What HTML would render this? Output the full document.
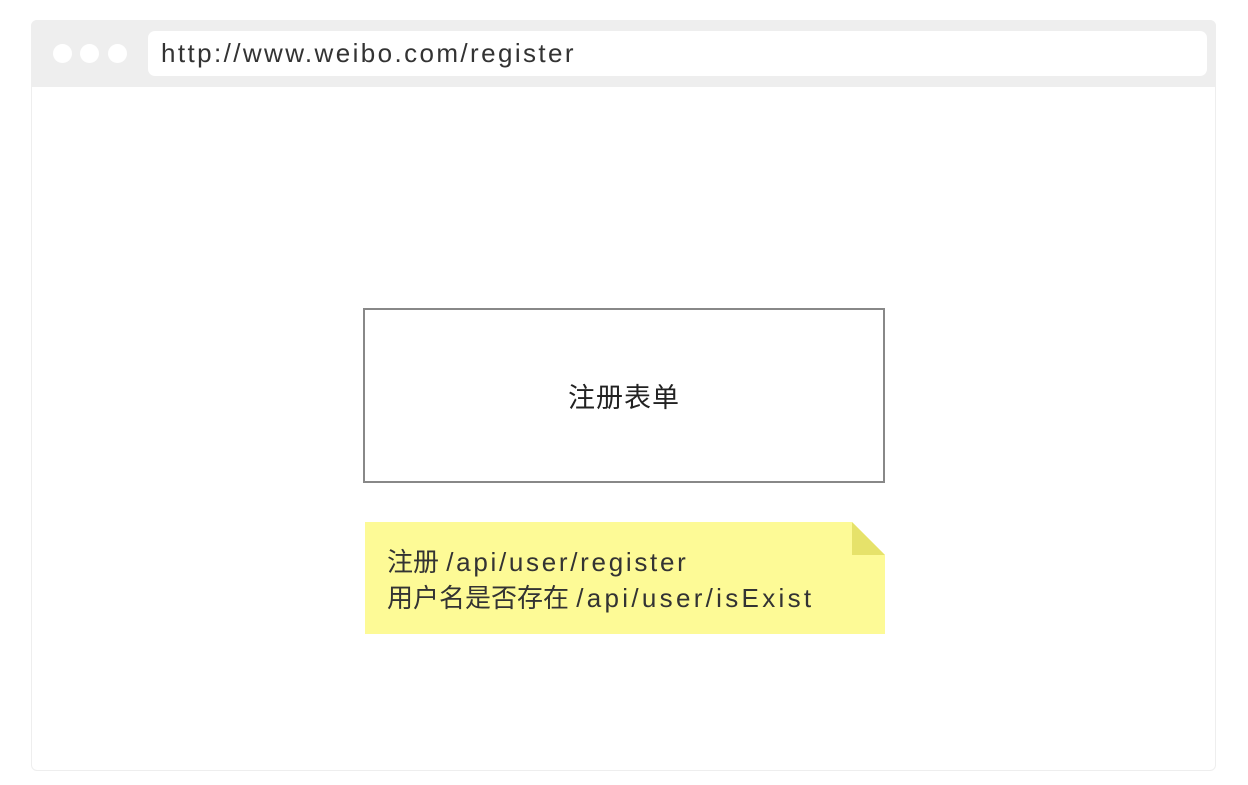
<!DOCTYPE html>
<html><head><meta charset="utf-8"><style>
html,body{margin:0;padding:0;background:#fff;width:1248px;height:785px;overflow:hidden;font-family:"Liberation Sans","Noto Sans CJK SC",sans-serif;}
.win{position:absolute;left:31px;top:20px;width:1185px;height:751px;border:1px solid #eee;border-radius:6px;background:#fff;box-sizing:border-box;}
.hdr{position:absolute;left:31px;top:20px;width:1185px;height:67px;background:#eeeeee;border-radius:6px 6px 0 0;}
.dot{position:absolute;top:44px;width:19px;height:19px;border-radius:50%;background:#fff;}
.url{position:absolute;left:148px;top:31px;width:1059px;height:45px;background:#fff;border-radius:7px;font-size:26px;color:#333;line-height:45px;padding-left:13px;box-sizing:border-box;letter-spacing:2.4px;}
.form{position:absolute;left:363px;top:308px;width:522px;height:175px;border:2px solid #888;box-sizing:border-box;display:flex;align-items:center;justify-content:center;font-size:27px;color:#222;letter-spacing:1px;}
.note{position:absolute;left:365px;top:522px;width:520px;height:112px;background:#fdfa96;clip-path:polygon(0 0,487px 0,520px 33px,520px 112px,0 112px);}
.fold{position:absolute;left:852px;top:522px;width:33px;height:33px;background:#e6e26a;clip-path:polygon(0 0,100% 100%,0 100%);}
.nt{position:absolute;left:387px;top:544px;font-size:26px;line-height:36px;color:#333;white-space:nowrap;}
.l{letter-spacing:2.7px;}
.l2{letter-spacing:3.3px;}
</style></head><body>
<div class="win"></div>
<div class="hdr"></div>
<div class="dot" style="left:53px"></div>
<div class="dot" style="left:80px"></div>
<div class="dot" style="left:108px"></div>
<div class="url">http://www.weibo.com/register</div>
<div class="form">注册表单</div>
<div class="note"></div>
<div class="fold"></div>
<div class="nt">注册 <span class="l">/api/user/register</span><br>用户名是否存在 <span class="l2">/api/user/isExist</span></div>
</body></html>
